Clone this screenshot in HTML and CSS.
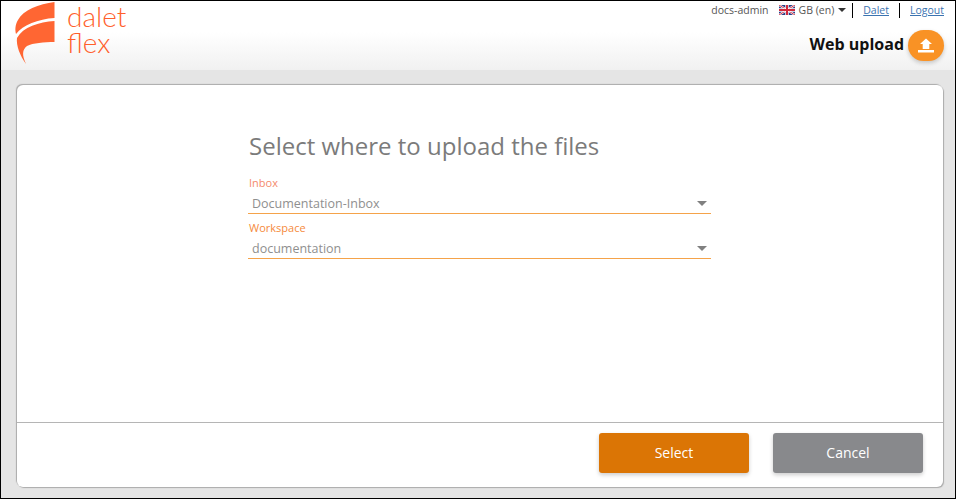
FILE: index.html
```html
<!DOCTYPE html>
<html lang="en">
<head>
<meta charset="utf-8">
<title>Web upload</title>
<link rel="stylesheet" href="styles.css">
</head>
<body>
<div class="app">
  <header class="header">
    <div class="brand">
      <svg class="logo-mark" width="42" height="64" viewBox="14 0 42 64" aria-hidden="true">
        <path fill="#ff6633" d="M54.500 1 C39 3 23 9 18 19 C15 24 15 29 16 33 C23 24 38 18 54.500 17 Z"/>
        <path fill="#ff6633" d="M54.500 20 C39 21 23 26 17 37 C16 44 20 55 26 63 C22 54 22 49 27 45 C33 42 44 41 54.500 41 Z"/>
      </svg>
      <div class="wordmark"><span class="word">dalet</span><span class="word">flex</span></div>
    </div>
    <div class="header-right">
      <nav class="topnav">
        <span class="user">docs-admin</span>
        <span class="lang">
          <svg class="flag" width="16" height="10" viewBox="0 0 16 10" aria-hidden="true">
            <rect width="16" height="10" fill="#2b3f86"/>
            <path d="M0 0 L16 10 M16 0 L0 10" stroke="#fff" stroke-width="2"/>
            <path d="M0 0 L16 10 M16 0 L0 10" stroke="#d0394a" stroke-width="1"/>
            <path d="M8 0 V10 M0 5 H16" stroke="#fff" stroke-width="3.400"/>
            <path d="M8 0 V10 M0 5 H16" stroke="#d0283c" stroke-width="2"/>
          </svg>
          GB (en)
          <span class="caret"></span>
        </span>
        <a class="link link-sep" href="#">Dalet</a>
        <a class="link link-sep" href="#">Logout</a>
      </nav>
      <div class="page-title">
        <span class="page-name">Web upload</span>
        <span class="upload-badge">
          <svg width="16" height="16" viewBox="0 0 16 16" aria-hidden="true">
            <path fill="#fff" d="M8 .5 L14 6 H11.300 V11 H4.700 V6 H2 Z"/>
            <rect x="0" y="12" width="16" height="2.500" fill="#fff"/>
          </svg>
        </span>
      </div>
    </div>
  </header>
  <main class="main">
    <section class="card">
      <div class="card-body">
        <form class="form">
          <h1 class="form-title">Select where to upload the files</h1>
          <div class="field">
            <label class="field-label">Inbox</label>
            <div class="select"><span>Documentation-Inbox</span><i class="select-arrow"></i></div>
          </div>
          <div class="field">
            <label class="field-label field-label-alt">Workspace</label>
            <div class="select"><span>documentation</span><i class="select-arrow"></i></div>
          </div>
        </form>
      </div>
      <footer class="card-footer">
        <button class="btn btn-primary" type="button">Select</button>
        <button class="btn btn-secondary" type="button">Cancel</button>
      </footer>
    </section>
  </main>
</div>
</body>
</html>
```

FILE: styles.css
```css
* { box-sizing: border-box; }
html, body { margin: 0; height: 100%; }
body {
  font-family: "Open Sans", "Liberation Sans", sans-serif;
  background: #e5e5e5;
  overflow: hidden;
}
.app {
  width: 956px;
  height: 499px;
  border: 1px solid #000;
  display: flex;
  flex-direction: column;
  background: #e5e5e5;
}
.header {
  height: 69px;
  flex: none;
  display: flex;
  justify-content: space-between;
  background: linear-gradient(to bottom, #fff 0%, #fff 45%, #f1f1f1 100%);
}
.brand {
  display: flex;
  align-items: flex-start;
  padding-left: 13px;
}
.logo-mark { flex: none; }
.wordmark {
  display: flex;
  flex-direction: column;
  margin-left: 11px;
  padding-top: 2px;
  font-family: "Lato", sans-serif;
  font-weight: 300;
  font-size: 28px;
  line-height: 26px;
  color: #ff5f2c;
}
.word { height: 26px; }
.header-right {
  display: flex;
  flex-direction: column;
  align-items: flex-end;
  padding-right: 11px;
}
.topnav {
  display: flex;
  align-items: center;
  height: 18px;
  font-size: 10.5px;
  color: #555;
}
.user { margin-right: 10px; }
.lang { display: flex; align-items: center; }
.flag { margin-right: 4px; }
.caret {
  width: 0;
  height: 0;
  margin-left: 4px;
  border-left: 4px solid transparent;
  border-right: 4px solid transparent;
  border-top: 4px solid #333;
}
.link { color: #3b73b0; text-decoration: underline; }
.link-sep {
  border-left: 1px solid #000;
  margin-left: 6px;
  padding-left: 10px;
  line-height: 15px;
}
.link-sep + .link-sep { margin-left: 10px; }
.page-title {
  display: flex;
  align-items: center;
  margin-top: 11px;
}
.page-name {
  font-size: 16px;
  font-weight: 700;
  color: #111;
  margin-bottom: 4px;
}
.upload-badge {
  width: 36px;
  height: 31px;
  margin-left: 4px;
  border-radius: 16px;
  background: #f99225;
  box-shadow: 0 2px 4px rgba(0,0,0,.2);
  display: flex;
  align-items: center;
  justify-content: center;
}
.main {
  flex: 1;
  display: flex;
  padding: 15px 12px 11px 16px;
  min-height: 0;
}
.card {
  flex: 1;
  display: flex;
  flex-direction: column;
  background: #fff;
  border-radius: 6px;
  box-shadow: -1px -1px 1px #aaa, 1px 1px 1px #aaa;
}
.card-body {
  flex: 1;
  display: flex;
  justify-content: center;
}
.form {
  width: 463px;
  margin-right: 1px;
  padding-top: 44px;
}
.form-title {
  margin: 0 0 14px;
  padding-left: 1px;
  font-size: 24px;
  line-height: 33px;
  font-weight: 400;
  color: #7b7b7b;
}
.field { height: 45px; }
.field-label {
  display: block;
  padding-left: 1px;
  font-size: 11px;
  line-height: 14px;
  color: #f58a6c;
}
.field-label-alt { color: #f58a3c; }
.select {
  height: 23px;
  margin-top: 1px;
  padding: 3px 4px 0;
  display: flex;
  align-items: center;
  justify-content: space-between;
  border-bottom: 1px solid #f5a34a;
  font-size: 12.5px;
  color: #8f8f8f;
}
.select-arrow {
  width: 0;
  height: 0;
  border-left: 5px solid transparent;
  border-right: 5px solid transparent;
  border-top: 5px solid #808080;
}
.card-footer {
  height: 65px;
  flex: none;
  display: flex;
  justify-content: flex-end;
  gap: 24px;
  padding: 10px 20px 0 0;
  border-top: 1px solid #b5b5b5;
}
.btn {
  width: 150px;
  height: 40px;
  padding: 0 0 2px;
  border: 0;
  border-radius: 3px;
  font-family: inherit;
  font-size: 14px;
  color: #fff;
  box-shadow: 0 2px 4px rgba(0,0,0,.2);
}
.btn-primary { background: #db7505; }
.btn-secondary { background: #88898c; }
```
